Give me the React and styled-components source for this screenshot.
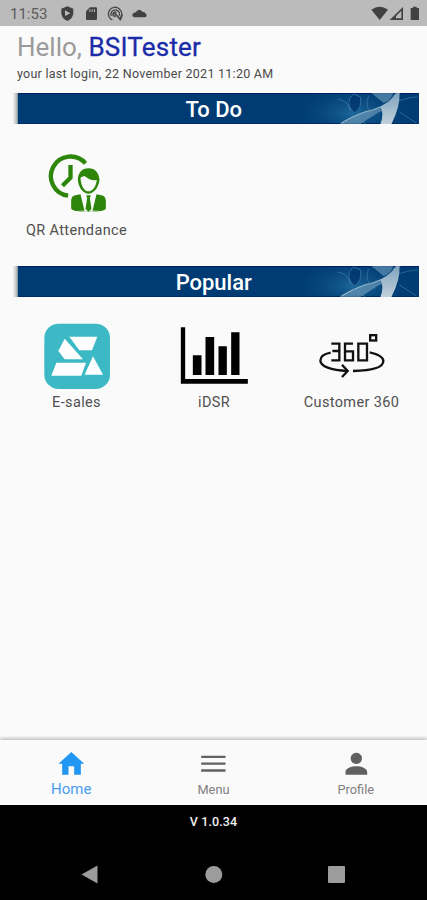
import React, { useState } from "react";
import styled, { createGlobalStyle } from "styled-components";

const GlobalStyle = createGlobalStyle`
  body {
    margin: 0;
    background-color: #fafafa;
    font-family: Roboto, "Liberation Sans", sans-serif;
  }
`;

const Screen = styled.div`
  display: flex;
  flex-direction: column;
  width: 100%;
  height: 900px;
  overflow: hidden;
  background-color: #fafafa;
`;

const StatusBar = styled.header`
  display: flex;
  justify-content: space-between;
  height: 26px;
  flex-shrink: 0;
  background-color: #bbbbbb;
`;

const StatusGroup = styled.div`
  display: flex;
  align-items: center;
`;

const StatusTime = styled.span`
  width: 47px;
  margin-left: 10px;
  padding-top: 2px;
  color: #5c5c5c;
  font-size: 15px;
  line-height: 24px;
`;

const Content = styled.main`
  flex: 1;
  display: flex;
  flex-direction: column;
`;

const Greeting = styled.h1`
  margin: 6px 0 0 17px;
  color: #9a9a9a;
  font-size: 26px;
  font-weight: 400;
  line-height: 30px;
`;

const UserName = styled.span`
  color: #1a2ca8;
  letter-spacing: 0.2px;
  -webkit-text-stroke: 0.3px #1a2ca8;
`;

const LastLogin = styled.p`
  margin: 4px 0 0 17px;
  color: #4a4a4a;
  font-size: 12.5px;
  line-height: 16px;
  letter-spacing: 0.26px;
`;

const BannerBox = styled.div`
  display: grid;
  height: 31px;
  margin: ${(props) => props.$top}px 8.5px 0 13px;
  background: linear-gradient(90deg, #f0f0ee 0, #c4c9c6 3px, #7d8f95 5px, #003c73 5px);
  > * {
    grid-area: 1 / 1;
  }
`;

const BannerTitle = styled.h2`
  margin: 0;
  padding-right: 4px;
  color: #ffffff;
  font-size: 22px;
  font-weight: 500;
  line-height: 33px;
  text-align: center;
  z-index: 1;
`;

const BannerArt = styled.svg`
  display: block;
  width: 100%;
  height: 31px;
`;

const TileGrid = styled.div`
  display: grid;
  grid-template-columns: repeat(3, 137.5px);
  margin: ${(props) => props.$top}px 0 0 7.75px;
`;

const TileBox = styled.div`
  display: flex;
  flex-direction: column;
  align-items: center;
`;

const TileIcon = styled.svg`
  width: 80px;
  height: 68px;
`;

const TileLabel = styled.span`
  margin-top: 2.5px;
  color: #505050;
  font-size: 14.5px;
  line-height: 20px;
  letter-spacing: 0.35px;
`;

const TabBar = styled.nav`
  display: grid;
  grid-template-columns: repeat(3, 1fr);
  height: 65px;
  flex-shrink: 0;
  background-color: #fafafa;
  box-shadow: 0 -2px 3px rgba(0, 0, 0, 0.22);
`;

const TabButton = styled.button`
  display: flex;
  flex-direction: column;
  align-items: center;
  padding: 9px 0 0;
  border: none;
  background: none;
  color: ${(props) => (props.$active ? "#2196f3" : "#616161")};
  font-family: inherit;
  cursor: pointer;
`;

const TabIcon = styled.svg`
  width: 32px;
  height: 30px;
`;

const TabLabel = styled.span`
  margin-top: 1px;
  color: ${(props) => (props.$active ? "#4a9df0" : "#808080")};
  font-size: ${(props) => (props.$active ? 15 : 12.8)}px;
  line-height: ${(props) => (props.$active ? 19 : 20)}px;
`;

const Footer = styled.footer`
  height: 95px;
  flex-shrink: 0;
  background-color: #000000;
`;

const Version = styled.div`
  padding-top: 8px;
  color: #f0f0f0;
  font-size: 12.5px;
  font-weight: 500;
  line-height: 18px;
  letter-spacing: 0.1px;
  text-align: center;
`;

const SystemNav = styled.div`
  display: flex;
  justify-content: space-between;
  margin: 33px 80px 0 79px;
`;

// ribbon waves at the right end of the banner
function Banner({ id, title, top }) {
  return (
    <BannerBox $top={top}>
      <BannerArt viewBox="0 0 405 31" preserveAspectRatio="none">
        <defs>
          <radialGradient id={`${id}-glow`}>
            <stop offset="0" stopColor="#2d7eae" stopOpacity="0.65" />
            <stop offset="1" stopColor="#003c73" stopOpacity="0" />
          </radialGradient>
          <linearGradient id={`${id}-ribbon`} x1="0" y1="0" x2="0" y2="1">
            <stop offset="0" stopColor="#7fa3bf" />
            <stop offset="1" stopColor="#c1d0dc" />
          </linearGradient>
        </defs>
        <ellipse cx="340" cy="20" rx="64" ry="30" fill={`url(#${id}-glow)`} />
        <path d="M5 .5H405" stroke="#001f68" strokeWidth="1.2" />
        <path d="M5 30.5H405" stroke="#002b68" strokeWidth="1" />
        <path d="M326 31Q343 20 359 17Q374 12 382 0H387Q379 15 364 20L347 31Z" fill="#8cb1ca" fillOpacity=".5" />
        <path d="M328 30Q347 19 359 17Q378 11 384 0" stroke="#a9c5d8" strokeOpacity=".8" fill="none" />
        <path d="M340 1Q330 10 341 20Q349 15 347 4Z" fill="#003671" fillOpacity=".8" stroke="#417fa9" strokeWidth=".7" />
        <path d="M324 6Q334 7 337 18M338 22L352 31M355 3Q350 16 362 23M386 19L403 30M385 8Q397 4 404 4" stroke="#5b92b5" strokeOpacity=".6" strokeWidth=".8" fill="none" />
        <path d="M358 0H380Q377 8 370 10Z" fill="#7ca7c4" fillOpacity=".55" />
        <path d="M381 2L386 0Q387 13 378 31H367Q371 20 367 14Q378 9 381 2Z" fill={`url(#${id}-ribbon)`} />
      </BannerArt>
      <BannerTitle>{title}</BannerTitle>
    </BannerBox>
  );
}

function AttendanceIcon() {
  return (
    <TileIcon viewBox="49.5 13 240 204" fill="#2d8609">
      <path d="M195 53A59 59 0 1 0 143 150" fill="none" stroke="#2d8609" strokeWidth="13" />
      <path d="M150 58V96L126 120" fill="none" stroke="#2d8609" strokeWidth="13" />
      <path fillRule="evenodd" d="M204 68C184 68 172 82 172 103C174 126 188 144 204 144C220 144 234 126 237 103C236 82 224 68 204 68ZM180 96Q188 91 192 91Q211 107 229 103C226 124 216 137 204 137C192 137 181 121 180 96Z" />
      <path d="M180 146L192 195H166Q152 194 152 184V164Q153 151 165 149ZM228 146L216 195H243Q256 193 256 184V164Q254 151 243 149Z" />
      <path d="M197 149H211L208 157L213 190L204 198L195 190L200 157Z" />
      <path d="M153 183Q170 198 204 198Q238 198 255 183V191Q238 199 204 199Q170 199 153 191Z" />
    </TileIcon>
  );
}

function SalesIcon() {
  return (
    <TileIcon viewBox="20 21 240 204">
      <rect x="42" y="26" width="197" height="196" rx="43" fill="#3cb9c5" />
      <g fill="#ffffff">
        <path d="M117 65H201L185 106H147Z" />
        <path d="M103 71L158 133H103L84 108Z" />
        <path d="M78 143H167L153 182H63Z" />
        <path d="M188 124L218 179H163Z" />
      </g>
    </TileIcon>
  );
}

function ChartIcon() {
  return (
    <TileIcon viewBox="13.5 21 240 204">
      <path d="M34 37H47V192H235V206H34Z" />
      <path d="M70 121H96V180H70ZM108 66H134V180H108ZM147 94H172V180H147ZM185 52H210V180H185Z" />
    </TileIcon>
  );
}

function Customer360Icon() {
  return (
    <TileIcon viewBox="51 21 240 204" fill="none" stroke="#111111" strokeWidth="7">
      <path d="M109 86H133V136H109M112 108H133" />
      <path d="M174 86H150V136H174V109H150" />
      <path d="M190 86H216V136H190Z" />
      <rect x="225.5" y="60.500" width="18" height="16" />
      <path d="M107 113C86 117 76 126 76 137C77 154 107 166 157 168" />
      <path d="M224 112C250 118 265 127 265 138C265 157 230 167 174 168" />
      <path d="M141 149L158 168L141 186" />
    </TileIcon>
  );
}

function Tile({ icon, label }) {
  return (
    <TileBox>
      {icon}
      <TileLabel>{label}</TileLabel>
    </TileBox>
  );
}

const tabs = [
  { label: "Home", path: "M44.500 36L6 71H17V104H36V79H53V104H73V71H83Z" },
  { label: "Menu", path: "M8 47H81V54H8ZM8 67.500H81V74.500H8ZM8 88H81V95H8Z" },
  {
    label: "Profile",
    path: "M44.500 38A17 17 0 1 1 44.400 38ZM12 104V96C12 85 30 79 44.500 79C59 79 77 85 77 96V104Z",
  },
];

function App() {
  const [active, setActive] = useState("Home");

  return (
    <>
      <GlobalStyle />
      <Screen>
        <StatusBar>
          <StatusGroup>
            <StatusTime>11:53</StatusTime>
            <svg width="96" height="26" viewBox="171 0 288 78" fill="#414141">
              <path fillRule="evenodd" d="M202 19L220 26V39Q220 54 202 63Q184 54 184 39V26ZM195 31V48L211 40Z" />
              <path fillRule="evenodd" d="M270 22H288Q291 22 291 25V57Q291 60 288 60H261Q258 60 258 57V34ZM268 28V36H271V28ZM275 28V36H278V28ZM282 28V36H285V28Z" />
              <g fill="none" stroke="#484848" strokeWidth="4">
                <path d="M337 60A20 20 0 1 1 358 57" />
                <path d="M334 48A13 13 0 1 1 358 47" />
                <path d="M341 36L361 58M349 38A6 6 0 1 0 347 48M367 43L360 61" strokeWidth="5" />
              </g>
              <path d="M407 52Q397 52 397 45Q398 38 407 37Q417 22 427 35Q436 35 437 41Q441 43 440 48Q439 52 433 52Z" />
            </svg>
          </StatusGroup>
          <StatusGroup>
            <svg width="57" height="26" viewBox="471 0 171 78" fill="#414141">
              <path d="M475 29Q500 12 525 29L500 60Z" />
              <path fillRule="evenodd" d="M570 21V60H530ZM565 32L549 49V55H565Z" />
              <path d="M600 20H611V24H618V60H593V24H600Z" />
            </svg>
          </StatusGroup>
        </StatusBar>
        <Content>
          <Greeting>
            Hello, <UserName>BSITester</UserName>
          </Greeting>
          <LastLogin>your last login, 22 November 2021 11:20 AM</LastLogin>
          <Banner id="todo" title="To Do" top={11} />
          <TileGrid $top={26}>
            <Tile icon={<AttendanceIcon />} label="QR Attendance" />
          </TileGrid>
          <Banner id="popular" title="Popular" top={25.5} />
          <TileGrid $top={25}>
            <Tile icon={<SalesIcon />} label="E-sales" />
            <Tile icon={<ChartIcon />} label="iDSR" />
            <Tile icon={<Customer360Icon />} label="Customer 360" />
          </TileGrid>
        </Content>
        <TabBar>
          {tabs.map((tab) => (
            <TabButton
              key={tab.label}
              $active={active === tab.label}
              onClick={() => setActive(tab.label)}
            >
              <TabIcon viewBox="-4.500 27 96 90" fill="currentColor">
                <path d={tab.path} />
              </TabIcon>
              <TabLabel $active={active === tab.label}>{tab.label}</TabLabel>
            </TabButton>
          ))}
        </TabBar>
        <Footer>
          <Version>V 1.0.34</Version>
          <SystemNav>
            <svg width="20" height="20" viewBox="0 0 20 20" fill="#9c9c9c">
              <path d="M2.500 10.500L18.500 1.500V19.500Z" />
            </svg>
            <svg width="20" height="20" viewBox="0 0 20 20" fill="#9c9c9c">
              <circle cx="10.800" cy="10.500" r="8.500" />
            </svg>
            <svg width="20" height="20" viewBox="0 0 20 20" fill="#9c9c9c">
              <rect x="1" y="2" width="17" height="17" rx="1" />
            </svg>
          </SystemNav>
        </Footer>
      </Screen>
    </>
  );
}

export default App;
